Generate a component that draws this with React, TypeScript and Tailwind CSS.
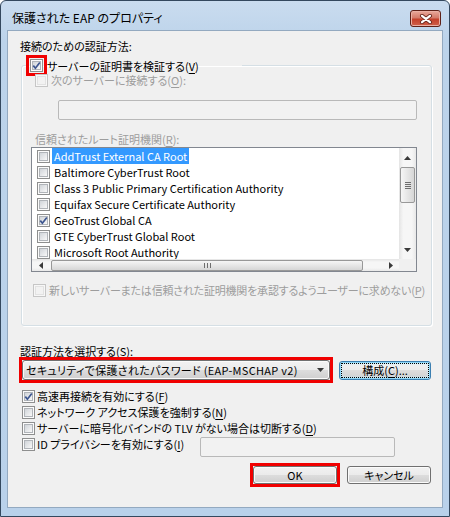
import React from 'react';

const U: React.FC<{ children: React.ReactNode }> = ({ children }) => (
  <span className="underline underline-offset-[2px]">{children}</span>
);

const CheckBox: React.FC<{ checked?: boolean; disabled?: boolean }> = ({ checked = false, disabled = false }) => (
  <span
    className={`relative flex h-[13px] w-[13px] shrink-0 items-center justify-center border ${
      disabled ? 'border-[#c6c6c6] bg-[#f7f7f7]' : 'border-[#8e8f8f] bg-[#fbfbfb]'
    }`}
  >
    <span
      className={`h-[9px] w-[9px] border ${
        disabled
          ? 'border-[#e2e2e2] bg-[#f2f2f2]'
          : 'border-[#b0b4b9] bg-[linear-gradient(135deg,#d0d4d9,#f8f8f8)]'
      }`}
    />
    {checked && (
      <svg className="absolute left-0 top-0" width="11" height="11" viewBox="0 0 11 11">
        <path d="M2.3 5.6 L4.4 8.2 L8.8 2.4" fill="none" stroke="#3d5690" strokeWidth="1.7" />
      </svg>
    )}
  </span>
);

const Arrow: React.FC<{ dir: 'up' | 'down' | 'left' | 'right' }> = ({ dir }) => {
  const d = {
    up: 'M0 4 L3.5 0 L7 4 Z',
    down: 'M0 0 L7 0 L3.5 4 Z',
    left: 'M4 0 L4 7 L0 3.5 Z',
    right: 'M0 0 L4 3.5 L0 7 Z',
  }[dir];
  const vertical = dir === 'up' || dir === 'down';
  return (
    <svg width={vertical ? 7 : 4} height={vertical ? 4 : 7} viewBox={vertical ? '0 0 7 4' : '0 0 4 7'}>
      <path d={d} fill="#3a3a3a" />
    </svg>
  );
};

const certs = [
  { name: 'AddTrust External CA Root', checked: false, selected: true },
  { name: 'Baltimore CyberTrust Root', checked: false },
  { name: 'Class 3 Public Primary Certification Authority', checked: false },
  { name: 'Equifax Secure Certificate Authority', checked: false },
  { name: 'GeoTrust Global CA', checked: true },
  { name: 'GTE CyberTrust Global Root', checked: false },
  { name: 'Microsoft Root Authority', checked: false },
];

const face =
  'rounded-[3px] border border-[#707070] bg-[linear-gradient(#f2f2f2_0%,#ebebeb_50%,#dddddd_50%,#cfcfcf_100%)] shadow-[inset_0_0_0_1px_#fbfbfb]';
const button = `flex h-[18px] items-center justify-center ${face}`;

const App: React.FC = () => {
  return (
    <div className="flex h-[517px] w-[450px] flex-col rounded-t-[6px] border border-[#34485e] bg-[linear-gradient(#cadcef,#bcd3ea_40px,#b9d1ea)] font-['Noto_Sans_CJK_JP',sans-serif] text-[11px] leading-[16px] text-black [font-feature-settings:'palt']">
      {/* title bar */}
      <div className="flex h-[29px] shrink-0 items-start justify-between">
        <div className="ml-[11px] mt-[8px] text-[12px] leading-[18px]">保護された EAP のプロパティ</div>
        <div className="mr-[8px] mt-[9px] flex h-[17px] w-[31px] items-center justify-center rounded-[3px] border border-[#5e2118] bg-[linear-gradient(#e9a99b,#d47b6a_45%,#c4412b_55%,#d0604a)] shadow-[inset_0_0_0_1px_#eab0a4]">
          <svg width="14" height="10" viewBox="0 0 14 10">
            <path d="M3 1.8 L11 8.2 M11 1.8 L3 8.2" stroke="#6b2a20" strokeWidth="4" strokeLinecap="round" />
            <path d="M3 1.8 L11 8.2 M11 1.8 L3 8.2" stroke="#ffffff" strokeWidth="2.2" strokeLinecap="round" />
          </svg>
        </div>
      </div>

      {/* client area */}
      <div className="mx-[6px] flex h-[478px] shrink-0 flex-col border border-[#93a9c0] bg-[#f0f0f0] pl-[12px] pr-[10px] pt-[7px]">
        <div className="h-[16px]">接続のための認証方法:</div>

        <fieldset className="ml-[1px] mt-[1px] flex min-w-0 flex-col rounded-[3px] border border-[#d5dfe5] pb-[27px] shadow-[inset_1px_1px_0_#fff,1px_1px_0_#fff]">
          <legend className="ml-[4px] pr-[43px]">
            <div className="flex h-[21px] items-center">
              <span className="flex h-[21px] w-[21px] items-center justify-center border-[3px] border-[#f00000]">
                <CheckBox checked />
              </span>
              <span>
                サーバーの証明書を検証する(<U>V</U>)
              </span>
            </div>
          </legend>

          <div className="-mt-[2px] flex h-[12px] items-center pl-[13px] leading-[12px] text-[#9d9d9d]">
            <CheckBox disabled />
            <span className="ml-[3px]">
              次のサーバーに接続する(<U>O</U>):
            </span>
          </div>

          <div className="ml-[36px] mt-[14px] h-[20px] w-[359px] rounded-[2px] border border-[#b9b9b9] bg-[#f2f2f2]" />

          <div className="ml-[13px] mt-[11px] h-[16px] text-[#9d9d9d]">
            信頼されたルート証明機関(<U>R</U>):
          </div>

          {/* certificate list */}
          <div className="ml-[9px] flex h-[125px] w-[386px] flex-col border border-[#828790] bg-white">
            <div className="flex h-[111px]">
              <div className="flex-1 overflow-hidden whitespace-nowrap">
                {certs.map((c) => (
                  <div key={c.name} className="flex h-[16px] items-center pl-[5px]">
                    <CheckBox checked={c.checked} />
                    <span
                      className={`ml-[2px] flex h-[16px] items-center px-[2px] ${
                        c.selected ? 'bg-[#3399ff] text-white' : ''
                      }`}
                    >
                      {c.name}
                    </span>
                  </div>
                ))}
              </div>
              <div className="flex w-[17px] flex-col bg-[linear-gradient(90deg,#e4e4e4,#f6f6f6_25%,#f6f6f6_75%,#e8e8e8)]">
                <div className="flex h-[17px] items-center justify-center pt-[2px]">
                  <Arrow dir="up" />
                </div>
                <div className="mx-[1px] mt-[2px] flex h-[36px] flex-col items-center justify-center gap-[1px] rounded-[2px] border border-[#989898] bg-[linear-gradient(90deg,#f6f6f6,#e6e6e6_50%,#d6d6d6)]">
                  <span className="h-[1px] w-[6px] bg-[#6e6e6e]" />
                  <span className="h-[1px] w-[6px] bg-[#6e6e6e]" />
                  <span className="h-[1px] w-[6px] bg-[#6e6e6e]" />
                  <span className="h-[1px] w-[6px] bg-[#6e6e6e]" />
                </div>
                <div className="flex-1" />
                <div className="flex h-[17px] items-center justify-center pb-[2px]">
                  <Arrow dir="down" />
                </div>
              </div>
            </div>
            <div className="flex h-[12px]">
              <div className="flex flex-1 items-center bg-[linear-gradient(#e4e4e4,#f6f6f6_25%,#f6f6f6_75%,#e8e8e8)]">
                <div className="flex w-[17px] justify-center">
                  <Arrow dir="left" />
                </div>
                <div className="ml-[2px] flex h-[11px] w-[312px] items-center justify-center gap-[2px] rounded-[2px] border border-[#989898] bg-[linear-gradient(#f6f6f6,#e6e6e6_50%,#d6d6d6)]">
                  <span className="h-[5px] w-[1px] bg-[#6e6e6e]" />
                  <span className="h-[5px] w-[1px] bg-[#6e6e6e]" />
                  <span className="h-[5px] w-[1px] bg-[#6e6e6e]" />
                </div>
                <div className="flex-1" />
                <div className="flex w-[17px] justify-center">
                  <Arrow dir="right" />
                </div>
              </div>
              <div className="w-[17px] bg-[#f0f0f0]" />
            </div>
          </div>

          <div className="ml-[11px] mt-[10px] flex h-[16px] items-center text-[#9d9d9d]">
            <CheckBox disabled />
            <span className="ml-[3px] whitespace-nowrap tracking-[-0.2px]">
              新しいサーバーまたは信頼された証明機関を承認するようユーザーに求めない(<U>P</U>)
            </span>
          </div>
        </fieldset>

        <div className="mt-[18px] h-[14px] leading-[14px]">
          認証方法を選択する(<U>S</U>):
        </div>

        <div className="-ml-[1px] -mt-[1px] flex items-center">
          <div className="border-[3px] border-[#f00000]">
            <div className={`flex h-[20px] w-[308px] items-center justify-between pl-[3px] pr-[5px] ${face}`}>
              <span className="whitespace-nowrap tracking-[0.3px]">セキュリティで保護されたパスワード (EAP-MSCHAP v2)</span>
              <Arrow dir="down" />
            </div>
          </div>
          <div className="ml-[6px] flex h-[19px] w-[92px] items-center justify-center rounded-[3px] border border-[#3c7fb1] bg-[linear-gradient(#f2f2f2_0%,#ebebeb_50%,#dddddd_50%,#cfcfcf_100%)] p-[1px] shadow-[inset_0_0_0_1px_#8fd8f8,inset_0_0_2px_2px_#c6ecfb]">
            <div className="flex h-full w-full items-center justify-center border border-dotted border-black">
              構成(<U>C</U>)...
            </div>
          </div>
        </div>

        <div className="mt-[5px] flex flex-col">
          <div className="ml-[2px] flex h-[16px] items-center">
            <CheckBox checked />
            <span className="ml-[2px]">
              高速再接続を有効にする(<U>F</U>)
            </span>
          </div>
          <div className="ml-[2px] flex h-[16px] items-center">
            <CheckBox />
            <span className="ml-[2px]">
              ネットワーク アクセス保護を強制する(<U>N</U>)
            </span>
          </div>
          <div className="ml-[2px] flex h-[16px] items-center">
            <CheckBox />
            <span className="ml-[2px]">
              サーバーに暗号化バインドの TLV がない場合は切断する(<U>D</U>)
            </span>
          </div>
          <div className="ml-[2px] flex items-start">
            <div className="flex h-[16px] w-[178px] items-center">
              <CheckBox />
              <span className="ml-[2px]">
                ID プライバシーを有効にする(<U>I</U>)
              </span>
            </div>
            <div className="mt-[1px] h-[20px] w-[195px] rounded-[2px] border border-[#b9b9b9] bg-[#f2f2f2]" />
          </div>
        </div>

        <div className="mt-[6px] flex justify-end pr-[1px]">
          <div className="border-[3px] border-[#f00000]">
            <div className={`${button} w-[84px]`}>OK</div>
          </div>
          <div className={`${button} ml-[7px] mt-[3px] w-[84px]`}>キャンセル</div>
        </div>
      </div>
    </div>
  );
};

export default App;
